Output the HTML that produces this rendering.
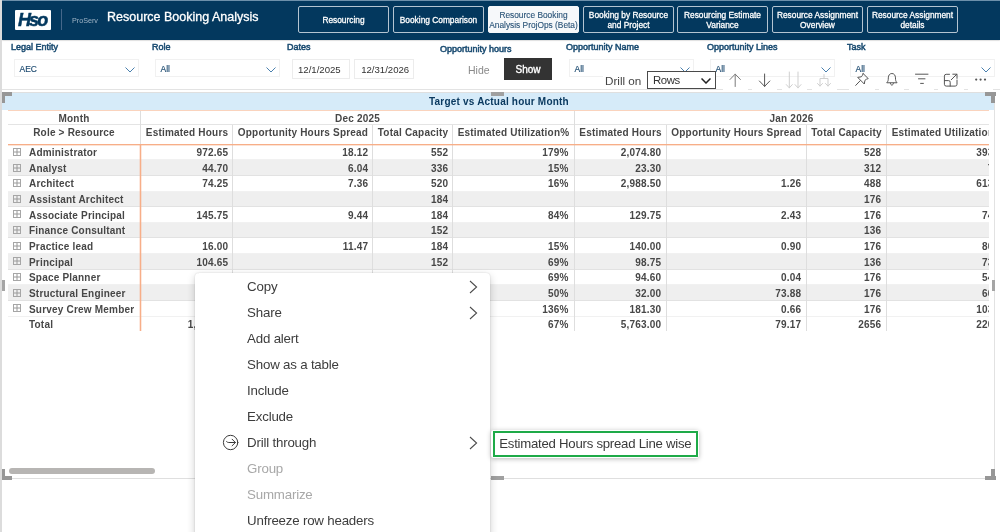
<!DOCTYPE html>
<html><head><meta charset="utf-8">
<style>
*{box-sizing:border-box;margin:0;padding:0}
html,body{width:1000px;height:532px;overflow:hidden;background:#fff;font-family:"Liberation Sans",sans-serif;}
.abs{position:absolute}
#hdr{left:2px;top:0;width:998px;height:39.6px;background:#03385e;box-shadow:0 0.5px 1.5px rgba(0,0,0,.3)}
.nb{position:absolute;top:6.4px;height:26.6px;width:91px;border:1px solid #b4c4d1;border-radius:2px;color:#fff;font-size:8.35px;line-height:10px;text-align:center;display:flex;align-items:center;justify-content:center;white-space:nowrap;padding-top:1.6px;-webkit-text-stroke:0.28px #fff}
.nb.act{background:#f6f8fa;border-color:#f6f8fa;color:#2b5579;-webkit-text-stroke:0.12px #2b5579}
.lbl{position:absolute;font-size:9px;color:#184a70;white-space:nowrap;line-height:11px;-webkit-text-stroke:0.5px #184a70}
.dd{position:absolute;height:18px;border:1px solid #f1f1f1;background:#fff;font-size:8.5px;color:#1c4a70;line-height:18px;padding-left:4.5px;-webkit-text-stroke:0.15px #1c4a70}
.chev{position:absolute;right:3.3px;top:6.5px;width:10px;height:6px;fill:none;stroke:#4a80ae;stroke-width:1}
.dt{position:absolute;top:59px;height:20px;border:1px solid #ececec;font-size:9.6px;color:#333;line-height:20px;text-align:left;font-family:"Liberation Sans",sans-serif}
.tb{font-size:10px;font-weight:bold;color:#474747;letter-spacing:0.2px;line-height:13px}
.c{text-align:center}.r{text-align:right}
.mi{font-size:13.3px;line-height:18px;letter-spacing:-0.2px}
.t{position:absolute;white-space:nowrap}
</style></head><body><div id="root" style="position:absolute;left:0;top:0;width:1000px;height:532px;overflow:hidden;will-change:transform">
<div class="abs" id="hdr"></div><div class="abs" style="left:2px;top:0;width:998px;height:1px;background:#6d90ab"></div>
<!-- logo -->
<div class="abs" style="left:15px;top:10px;width:36px;height:20px;background:#fff;border-radius:1px"></div>
<div class="t" id="logo" style="left:18px;top:10.4px;font-size:18px;font-weight:bold;font-style:italic;color:#03385e;letter-spacing:-1.9px;line-height:20px;-webkit-text-stroke:0.5px #03385e">Hso</div>
<div class="abs" style="left:61px;top:9px;width:1px;height:21px;background:#45678a"></div>
<div class="t" style="left:72px;top:15.5px;font-size:7.2px;color:#a0b4c6;line-height:9px">ProServ</div>
<div class="t" style="left:107px;top:8px;font-size:12.5px;color:#fff;line-height:18px;-webkit-text-stroke:0.3px #fff">Resource Booking Analysis</div>
<!-- nav -->
<div class="nb" style="left:298px">Resourcing</div>
<div class="nb" style="left:393px">Booking Comparison</div>
<div class="nb act" style="left:488px">Resource Booking<br>Analysis ProjOps (Beta)</div>
<div class="nb" style="left:583px">Booking by Resource<br>and Project</div>
<div class="nb" style="left:677px">Resourcing Estimate<br>Variance</div>
<div class="nb" style="left:772px">Resource Assignment<br>Overview</div>
<div class="nb" style="left:867px">Resource Assignment<br>details</div>

<!-- left edge / slicer area -->
<div class="abs" style="left:0;top:0;width:2px;height:532px;background:#dcdcdc"></div>
<div class="abs" style="left:2px;top:89px;width:721px;height:1px;background:#e3e3e3"></div><div class="abs" style="left:748px;top:89px;width:4px;height:1px;background:#e3e3e3"></div><div class="abs" style="left:777px;top:89px;width:5px;height:1px;background:#e3e3e3"></div><div class="abs" style="left:807px;top:89px;width:5px;height:1px;background:#e3e3e3"></div><div class="abs" style="left:837px;top:89px;width:12px;height:1px;background:#e3e3e3"></div><div class="abs" style="left:875px;top:89px;width:4px;height:1px;background:#e3e3e3"></div><div class="abs" style="left:904px;top:89px;width:5px;height:1px;background:#e3e3e3"></div><div class="abs" style="left:934px;top:89px;width:4px;height:1px;background:#e3e3e3"></div><div class="abs" style="left:964px;top:89px;width:4px;height:1px;background:#e3e3e3"></div><div class="abs" style="left:993px;top:89px;width:7px;height:1px;background:#e3e3e3"></div>
<div class="lbl" style="left:11px;top:42px">Legal Entity</div>
<div class="lbl" style="left:152px;top:42px">Role</div>
<div class="lbl" style="left:287px;top:42px">Dates</div>
<div class="lbl" style="left:440px;top:44px">Opportunity hours</div>
<div class="lbl" style="left:566px;top:42px">Opportunity Name</div>
<div class="lbl" style="left:707px;top:42px">Opportunity Lines</div>
<div class="lbl" style="left:847px;top:42px">Task</div>
<div class="dd" style="left:14px;top:59px;width:125px">AEC<svg class="chev" viewBox="0 0 10 6"><path d="M0.5 0.5 L5 5 L9.5 0.5"/></svg></div>
<div class="dd" style="left:155px;top:59px;width:125px">All<svg class="chev" viewBox="0 0 10 6"><path d="M0.5 0.5 L5 5 L9.5 0.5"/></svg></div>
<div class="dd" style="left:569px;top:59px;width:125px">All<svg class="chev" viewBox="0 0 10 6"><path d="M0.5 0.5 L5 5 L9.5 0.5"/></svg></div>
<div class="dd" style="left:710px;top:59px;width:125px">All<svg class="chev" viewBox="0 0 10 6"><path d="M0.5 0.5 L5 5 L9.5 0.5"/></svg></div>
<div class="dd" style="left:850px;top:59px;width:145px">All<svg class="chev" viewBox="0 0 10 6"><path d="M0.5 0.5 L5 5 L9.5 0.5"/></svg></div>
<div class="dt" style="left:292px;width:58px;padding-left:5px">12/1/2025</div>
<div class="dt" style="left:354px;width:60px;padding-left:6.2px">12/31/2026</div>
<div class="t" style="left:468px;top:63px;font-size:10.5px;color:#8a8a8a;line-height:14px">Hide</div>
<div class="abs" style="left:504px;top:58px;width:48px;height:22px;background:#333;color:#fff;font-size:10px;-webkit-text-stroke:0.35px #fff;text-align:center;line-height:23.2px">Show</div>
<!-- visual header -->
<div class="abs" style="left:603px;top:72px;width:50px;height:17px;background:#fff"></div>
<div class="t" style="left:605px;top:73.3px;font-size:11.7px;color:#444;line-height:15px">Drill on</div>
<div class="abs" style="left:647px;top:71px;width:68.5px;height:17.5px;border:1px solid #4a4a4a;background:#fff;font-size:11.4px;letter-spacing:-0.45px;line-height:17.5px;color:#333;padding-left:5px">Rows<svg style="position:absolute;left:53.2px;top:5.8px;width:10px;height:6px;fill:none;stroke:#222;stroke-width:1.5" viewBox="0 0 10 6"><path d="M0.5 0.5 L5 5 L9.5 0.5"/></svg></div>

<svg class="abs" style="left:720px;top:66px;width:280px;height:28px" viewBox="720 66 280 28" fill="none" stroke-linecap="round" stroke-linejoin="round">
<g stroke="#7a7a7a" stroke-width="1"><path d="M735.2 86.5V74.2M730 79.5l5.2-5.4 5.2 5.4"/></g>
<g stroke="#555" stroke-width="1"><path d="M764.6 74V86.3M759.4 81l5.2 5.4 5.2-5.4"/></g>
<g stroke="#cfcfcf" stroke-width="1"><path d="M789.3 72V87.8M786.3 84.6l3 3.3 3-3.3M798 72V87.8M795 84.6l3 3.3 3-3.3"/></g>
<g stroke="#cfcfcf" stroke-width="1"><path d="M824 74.5v4M820 86v-7.5h8V86M817.5 83.5l2.5 2.6 2.5-2.6M825.5 83.5l2.5 2.6 2.5-2.6"/></g>
<g stroke="#555" stroke-width="1"><path d="M863.2 73.6l5 5c-1.4 0.3-2.4 0.9-3.3 1.8l-0.6 3.6-6.6-6.6 3.6-0.6c0.9-0.9 1.5-1.9 1.9-3.2zM860.3 80.6l-4.6 4.8"/></g>
<g stroke="#555" stroke-width="1"><path d="M887 82.5c1.2-1.2 1.3-2.6 1.3-4.6 0-2.6 1.5-4.4 3.6-4.4s3.6 1.8 3.6 4.4c0 2 0.1 3.4 1.3 4.6zM890.4 83.2c0.2 1.3 0.8 1.9 1.5 1.9s1.3-0.6 1.5-1.9"/></g>
<g stroke="#555" stroke-width="1"><path d="M915.5 74.2h12.5M918.5 78.8h6.5M920.6 83.4h2.8"/></g>
<g stroke="#555" stroke-width="1"><path d="M949.5 74.3h-3.3a1.8 1.8 0 0 0-1.8 1.8v8.2a1.8 1.8 0 0 0 1.8 1.8h9a1.8 1.8 0 0 0 1.8-1.8v-4.3M944.4 80.6h4.2a1.6 1.6 0 0 1 1.6 1.6v3.9M951.2 79.8l5.6-5.6M952.8 74.2h4.2v4.2"/></g>
<g fill="#555" stroke="none"><circle cx="976.2" cy="79.6" r="1.1"/><circle cx="980.6" cy="79.6" r="1.1"/><circle cx="985" cy="79.6" r="1.1"/></g>
</svg>
<!-- visual container -->
<div class="abs" style="left:2px;top:92px;width:993px;height:387px;border:1px solid #dfdfdf;border-left:none;border-right:1.5px solid #e2e2e2"></div>
<div class="abs" style="left:2px;top:93px;width:991.5px;height:17px;background:#d6ebf9"></div>
<div class="t tb" style="left:429px;top:95px;color:#0b3a60;line-height:13px">Target vs Actual hour Month</div>
<div class="abs" id="tbl" style="left:8px;top:110px;width:981px;height:222px;overflow:hidden">
<div class="abs" style="left:0;top:0;width:981px;height:1.4px;background:#fad3bd"></div>
<div class="abs" style="left:0;top:14px;width:981px;height:1px;background:#e4e4e4"></div>
<div class="abs" style="left:0;top:34.7px;width:981px;height:15.63px;background:#fff;border-bottom:1px solid #f1f1f1"></div>
<div class="abs" style="left:0;top:50.33px;width:981px;height:15.63px;background:#efefef;border-bottom:1px solid #e2e2e2"></div>
<div class="abs" style="left:0;top:65.96px;width:981px;height:15.63px;background:#fff;border-bottom:1px solid #f1f1f1"></div>
<div class="abs" style="left:0;top:81.59px;width:981px;height:15.63px;background:#efefef;border-bottom:1px solid #e2e2e2"></div>
<div class="abs" style="left:0;top:97.22px;width:981px;height:15.63px;background:#fff;border-bottom:1px solid #f1f1f1"></div>
<div class="abs" style="left:0;top:112.85px;width:981px;height:15.63px;background:#efefef;border-bottom:1px solid #e2e2e2"></div>
<div class="abs" style="left:0;top:128.48px;width:981px;height:15.63px;background:#fff;border-bottom:1px solid #f1f1f1"></div>
<div class="abs" style="left:0;top:144.11px;width:981px;height:15.63px;background:#efefef;border-bottom:1px solid #e2e2e2"></div>
<div class="abs" style="left:0;top:159.74px;width:981px;height:15.63px;background:#fff;border-bottom:1px solid #f1f1f1"></div>
<div class="abs" style="left:0;top:175.37px;width:981px;height:15.63px;background:#efefef;border-bottom:1px solid #e2e2e2"></div>
<div class="abs" style="left:0;top:191.0px;width:981px;height:15.63px;background:#fff;border-bottom:1px solid #f1f1f1"></div>
<div class="abs" style="left:0;top:206.63px;width:981px;height:15.63px;background:#fff;"></div>
<div class="t tb c" style="left:0;top:1.7px;width:132px">Month</div>
<div class="t tb c" style="left:0;top:15.7px;width:132px">Role &gt; Resource</div>
<div class="t tb c" style="left:133px;top:1.7px;width:433px">Dec 2025</div>
<div class="t tb c" style="left:566.5px;top:1.7px;width:434px">Jan 2026</div>
<div class="t tb c" style="left:133px;top:15.7px;width:92px">Estimated Hours</div>
<div class="t tb c" style="left:225px;top:15.7px;width:140px">Opportunity Hours Spread</div>
<div class="t tb c" style="left:365px;top:15.7px;width:80px">Total Capacity</div>
<div class="t tb c" style="left:445px;top:15.7px;width:121px">Estimated Utilization%</div>
<div class="t tb c" style="left:566.5px;top:15.7px;width:92px">Estimated Hours</div>
<div class="t tb c" style="left:658.5px;top:15.7px;width:140px">Opportunity Hours Spread</div>
<div class="t tb c" style="left:798.5px;top:15.7px;width:80px">Total Capacity</div>
<div class="t tb c" style="left:878.5px;top:15.7px;width:122px">Estimated Utilization%</div>
<div class="abs" style="left:224px;top:15px;width:1px;height:206px;background:#dedede"></div>
<div class="abs" style="left:364px;top:15px;width:1px;height:206px;background:#dedede"></div>
<div class="abs" style="left:444px;top:15px;width:1px;height:206px;background:#dedede"></div>
<div class="abs" style="left:565.5px;top:1px;width:1px;height:220px;background:#dedede"></div>
<div class="abs" style="left:657.5px;top:15px;width:1px;height:206px;background:#dedede"></div>
<div class="abs" style="left:797.5px;top:15px;width:1px;height:206px;background:#dedede"></div>
<div class="abs" style="left:877.5px;top:15px;width:1px;height:206px;background:#dedede"></div>
<div class="abs" style="left:0;top:34px;width:981px;height:1px;background:#f7ae88"></div><div class="abs" style="left:0;top:35px;width:981px;height:1px;background:rgba(247,174,136,.35)"></div>
<div class="abs" style="left:132px;top:1px;width:1px;height:34px;background:#dedede"></div>
<div class="abs" style="left:132px;top:34px;width:1px;height:186.5px;background:#f7ae88"></div><div class="abs" style="left:131px;top:35px;width:1px;height:185.5px;background:rgba(247,174,136,.28)"></div><div class="abs" style="left:133px;top:35px;width:1px;height:185.5px;background:rgba(247,174,136,.28)"></div>
<svg class="abs" style="left:4.8px;top:37.9px;width:8px;height:8px" viewBox="0 0 8 8"><rect x="0.5" y="0.5" width="7" height="7" fill="none" stroke="#a6a6a6"/><path d="M4 1v6M1 4h6" stroke="#9a9a9a" stroke-width="1" fill="none"/></svg>
<div class="t tb" style="left:21px;top:36.2px">Administrator</div>
<div class="t tb r" style="left:133px;top:36.2px;width:87.2px">972.65</div>
<div class="t tb r" style="left:225px;top:36.2px;width:135.2px">18.12</div>
<div class="t tb r" style="left:365px;top:36.2px;width:75.2px">552</div>
<div class="t tb r" style="left:445px;top:36.2px;width:115.7px">179%</div>
<div class="t tb r" style="left:566.5px;top:36.2px;width:86.7px">2,074.80</div>
<div class="t tb r" style="left:798.5px;top:36.2px;width:74.7px">528</div>
<div class="t tb r" style="left:878.5px;top:36.2px;width:116.2px">393%</div>
<svg class="abs" style="left:4.8px;top:53.53px;width:8px;height:8px" viewBox="0 0 8 8"><rect x="0.5" y="0.5" width="7" height="7" fill="none" stroke="#a6a6a6"/><path d="M4 1v6M1 4h6" stroke="#9a9a9a" stroke-width="1" fill="none"/></svg>
<div class="t tb" style="left:21px;top:51.83px">Analyst</div>
<div class="t tb r" style="left:133px;top:51.83px;width:87.2px">44.70</div>
<div class="t tb r" style="left:225px;top:51.83px;width:135.2px">6.04</div>
<div class="t tb r" style="left:365px;top:51.83px;width:75.2px">336</div>
<div class="t tb r" style="left:445px;top:51.83px;width:115.7px">15%</div>
<div class="t tb r" style="left:566.5px;top:51.83px;width:86.7px">23.30</div>
<div class="t tb r" style="left:798.5px;top:51.83px;width:74.7px">312</div>
<div class="t tb r" style="left:878.5px;top:51.83px;width:116.2px">7%</div>
<svg class="abs" style="left:4.8px;top:69.16px;width:8px;height:8px" viewBox="0 0 8 8"><rect x="0.5" y="0.5" width="7" height="7" fill="none" stroke="#a6a6a6"/><path d="M4 1v6M1 4h6" stroke="#9a9a9a" stroke-width="1" fill="none"/></svg>
<div class="t tb" style="left:21px;top:67.46px">Architect</div>
<div class="t tb r" style="left:133px;top:67.46px;width:87.2px">74.25</div>
<div class="t tb r" style="left:225px;top:67.46px;width:135.2px">7.36</div>
<div class="t tb r" style="left:365px;top:67.46px;width:75.2px">520</div>
<div class="t tb r" style="left:445px;top:67.46px;width:115.7px">16%</div>
<div class="t tb r" style="left:566.5px;top:67.46px;width:86.7px">2,988.50</div>
<div class="t tb r" style="left:658.5px;top:67.46px;width:134.7px">1.26</div>
<div class="t tb r" style="left:798.5px;top:67.46px;width:74.7px">488</div>
<div class="t tb r" style="left:878.5px;top:67.46px;width:116.2px">613%</div>
<svg class="abs" style="left:4.8px;top:84.79px;width:8px;height:8px" viewBox="0 0 8 8"><rect x="0.5" y="0.5" width="7" height="7" fill="none" stroke="#a6a6a6"/><path d="M4 1v6M1 4h6" stroke="#9a9a9a" stroke-width="1" fill="none"/></svg>
<div class="t tb" style="left:21px;top:83.09px">Assistant Architect</div>
<div class="t tb r" style="left:365px;top:83.09px;width:75.2px">184</div>
<div class="t tb r" style="left:798.5px;top:83.09px;width:74.7px">176</div>
<svg class="abs" style="left:4.8px;top:100.42px;width:8px;height:8px" viewBox="0 0 8 8"><rect x="0.5" y="0.5" width="7" height="7" fill="none" stroke="#a6a6a6"/><path d="M4 1v6M1 4h6" stroke="#9a9a9a" stroke-width="1" fill="none"/></svg>
<div class="t tb" style="left:21px;top:98.72px">Associate Principal</div>
<div class="t tb r" style="left:133px;top:98.72px;width:87.2px">145.75</div>
<div class="t tb r" style="left:225px;top:98.72px;width:135.2px">9.44</div>
<div class="t tb r" style="left:365px;top:98.72px;width:75.2px">184</div>
<div class="t tb r" style="left:445px;top:98.72px;width:115.7px">84%</div>
<div class="t tb r" style="left:566.5px;top:98.72px;width:86.7px">129.75</div>
<div class="t tb r" style="left:658.5px;top:98.72px;width:134.7px">2.43</div>
<div class="t tb r" style="left:798.5px;top:98.72px;width:74.7px">176</div>
<div class="t tb r" style="left:878.5px;top:98.72px;width:116.2px">74%</div>
<svg class="abs" style="left:4.8px;top:116.05px;width:8px;height:8px" viewBox="0 0 8 8"><rect x="0.5" y="0.5" width="7" height="7" fill="none" stroke="#a6a6a6"/><path d="M4 1v6M1 4h6" stroke="#9a9a9a" stroke-width="1" fill="none"/></svg>
<div class="t tb" style="left:21px;top:114.35px">Finance Consultant</div>
<div class="t tb r" style="left:365px;top:114.35px;width:75.2px">152</div>
<div class="t tb r" style="left:798.5px;top:114.35px;width:74.7px">136</div>
<svg class="abs" style="left:4.8px;top:131.68px;width:8px;height:8px" viewBox="0 0 8 8"><rect x="0.5" y="0.5" width="7" height="7" fill="none" stroke="#a6a6a6"/><path d="M4 1v6M1 4h6" stroke="#9a9a9a" stroke-width="1" fill="none"/></svg>
<div class="t tb" style="left:21px;top:129.98px">Practice lead</div>
<div class="t tb r" style="left:133px;top:129.98px;width:87.2px">16.00</div>
<div class="t tb r" style="left:225px;top:129.98px;width:135.2px">11.47</div>
<div class="t tb r" style="left:365px;top:129.98px;width:75.2px">184</div>
<div class="t tb r" style="left:445px;top:129.98px;width:115.7px">15%</div>
<div class="t tb r" style="left:566.5px;top:129.98px;width:86.7px">140.00</div>
<div class="t tb r" style="left:658.5px;top:129.98px;width:134.7px">0.90</div>
<div class="t tb r" style="left:798.5px;top:129.98px;width:74.7px">176</div>
<div class="t tb r" style="left:878.5px;top:129.98px;width:116.2px">80%</div>
<svg class="abs" style="left:4.8px;top:147.31px;width:8px;height:8px" viewBox="0 0 8 8"><rect x="0.5" y="0.5" width="7" height="7" fill="none" stroke="#a6a6a6"/><path d="M4 1v6M1 4h6" stroke="#9a9a9a" stroke-width="1" fill="none"/></svg>
<div class="t tb" style="left:21px;top:145.61px">Principal</div>
<div class="t tb r" style="left:133px;top:145.61px;width:87.2px">104.65</div>
<div class="t tb r" style="left:365px;top:145.61px;width:75.2px">152</div>
<div class="t tb r" style="left:445px;top:145.61px;width:115.7px">69%</div>
<div class="t tb r" style="left:566.5px;top:145.61px;width:86.7px">98.75</div>
<div class="t tb r" style="left:798.5px;top:145.61px;width:74.7px">136</div>
<div class="t tb r" style="left:878.5px;top:145.61px;width:116.2px">73%</div>
<svg class="abs" style="left:4.8px;top:162.94px;width:8px;height:8px" viewBox="0 0 8 8"><rect x="0.5" y="0.5" width="7" height="7" fill="none" stroke="#a6a6a6"/><path d="M4 1v6M1 4h6" stroke="#9a9a9a" stroke-width="1" fill="none"/></svg>
<div class="t tb" style="left:21px;top:161.24px">Space Planner</div>
<div class="t tb r" style="left:133px;top:161.24px;width:87.2px">126.50</div>
<div class="t tb r" style="left:225px;top:161.24px;width:135.2px">0.21</div>
<div class="t tb r" style="left:365px;top:161.24px;width:75.2px">184</div>
<div class="t tb r" style="left:445px;top:161.24px;width:115.7px">69%</div>
<div class="t tb r" style="left:566.5px;top:161.24px;width:86.7px">94.60</div>
<div class="t tb r" style="left:658.5px;top:161.24px;width:134.7px">0.04</div>
<div class="t tb r" style="left:798.5px;top:161.24px;width:74.7px">176</div>
<div class="t tb r" style="left:878.5px;top:161.24px;width:116.2px">54%</div>
<svg class="abs" style="left:4.8px;top:178.57px;width:8px;height:8px" viewBox="0 0 8 8"><rect x="0.5" y="0.5" width="7" height="7" fill="none" stroke="#a6a6a6"/><path d="M4 1v6M1 4h6" stroke="#9a9a9a" stroke-width="1" fill="none"/></svg>
<div class="t tb" style="left:21px;top:176.87px">Structural Engineer</div>
<div class="t tb r" style="left:133px;top:176.87px;width:87.2px">92.00</div>
<div class="t tb r" style="left:225px;top:176.87px;width:135.2px">12.35</div>
<div class="t tb r" style="left:365px;top:176.87px;width:75.2px">184</div>
<div class="t tb r" style="left:445px;top:176.87px;width:115.7px">50%</div>
<div class="t tb r" style="left:566.5px;top:176.87px;width:86.7px">32.00</div>
<div class="t tb r" style="left:658.5px;top:176.87px;width:134.7px">73.88</div>
<div class="t tb r" style="left:798.5px;top:176.87px;width:74.7px">176</div>
<div class="t tb r" style="left:878.5px;top:176.87px;width:116.2px">66%</div>
<svg class="abs" style="left:4.8px;top:194.2px;width:8px;height:8px" viewBox="0 0 8 8"><rect x="0.5" y="0.5" width="7" height="7" fill="none" stroke="#a6a6a6"/><path d="M4 1v6M1 4h6" stroke="#9a9a9a" stroke-width="1" fill="none"/></svg>
<div class="t tb" style="left:21px;top:192.5px">Survey Crew Member</div>
<div class="t tb r" style="left:133px;top:192.5px;width:87.2px">250.00</div>
<div class="t tb r" style="left:225px;top:192.5px;width:135.2px">1.93</div>
<div class="t tb r" style="left:365px;top:192.5px;width:75.2px">184</div>
<div class="t tb r" style="left:445px;top:192.5px;width:115.7px">136%</div>
<div class="t tb r" style="left:566.5px;top:192.5px;width:86.7px">181.30</div>
<div class="t tb r" style="left:658.5px;top:192.5px;width:134.7px">0.66</div>
<div class="t tb r" style="left:798.5px;top:192.5px;width:74.7px">176</div>
<div class="t tb r" style="left:878.5px;top:192.5px;width:116.2px">103%</div>
<div class="t tb" style="left:21px;top:208.13px">Total</div>
<div class="t tb r" style="left:133px;top:208.13px;width:87.2px">1,806.50</div>
<div class="t tb r" style="left:225px;top:208.13px;width:135.2px">66.92</div>
<div class="t tb r" style="left:365px;top:208.13px;width:75.2px">2696</div>
<div class="t tb r" style="left:445px;top:208.13px;width:115.7px">67%</div>
<div class="t tb r" style="left:566.5px;top:208.13px;width:86.7px">5,763.00</div>
<div class="t tb r" style="left:658.5px;top:208.13px;width:134.7px">79.17</div>
<div class="t tb r" style="left:798.5px;top:208.13px;width:74.7px">2656</div>
<div class="t tb r" style="left:878.5px;top:208.13px;width:116.2px">220%</div>
</div>
<div class="abs" style="left:2px;top:92px;width:9.6px;height:3.8px;background:#979797"></div><div class="abs" style="left:2px;top:92px;width:2.7px;height:10.5px;background:#979797"></div>
<div class="abs" style="left:985px;top:92px;width:10.5px;height:3.8px;background:#979797"></div><div class="abs" style="left:991.3px;top:92px;width:4.2px;height:10.5px;background:#979797"></div>
<div class="abs" style="left:2px;top:475.8px;width:9.6px;height:3.8px;background:#979797"></div><div class="abs" style="left:2px;top:469px;width:2.7px;height:10.6px;background:#979797"></div>
<div class="abs" style="left:985px;top:475.8px;width:10.5px;height:3.8px;background:#979797"></div><div class="abs" style="left:991.3px;top:469px;width:4.2px;height:10.6px;background:#979797"></div>
<div class="abs" style="left:491.3px;top:92px;width:13px;height:3.8px;background:#a0a0a0"></div>
<div class="abs" style="left:491.3px;top:475.8px;width:13px;height:3.8px;background:#a0a0a0"></div>
<div class="abs" style="left:2px;top:280px;width:3px;height:11px;background:#a5a5a5"></div>
<div class="abs" style="left:992px;top:280px;width:3px;height:11px;background:#a5a5a5"></div>
<div class="abs" style="left:9px;top:467.5px;width:146px;height:6px;border-radius:3px;background:#b7b5b3"></div>
<div class="abs" id="menu" style="left:194.5px;top:272.8px;width:295.5px;height:280px;background:#fff;border-radius:4px;box-shadow:0 0 2px rgba(0,0,0,.16),0 3px 9px rgba(0,0,0,.2)">
<div class="t mi" style="left:52.6px;top:5.2px;color:#3d3d3d">Copy</div>
<svg class="abs" style="left:274px;top:6.9px;width:9px;height:14px;fill:none;stroke:#4a4a4a;stroke-width:1.05" viewBox="0 0 9 14"><path d="M1 1 L7.6 7 L1 13"/></svg>
<div class="t mi" style="left:52.6px;top:31.2px;color:#3d3d3d">Share</div>
<svg class="abs" style="left:274px;top:32.9px;width:9px;height:14px;fill:none;stroke:#4a4a4a;stroke-width:1.05" viewBox="0 0 9 14"><path d="M1 1 L7.6 7 L1 13"/></svg>
<div class="t mi" style="left:52.6px;top:57.2px;color:#3d3d3d">Add alert</div>
<div class="t mi" style="left:52.6px;top:83.2px;color:#3d3d3d">Show as a table</div>
<div class="t mi" style="left:52.6px;top:109.2px;color:#3d3d3d">Include</div>
<div class="t mi" style="left:52.6px;top:135.2px;color:#3d3d3d">Exclude</div>
<div class="t mi" style="left:52.6px;top:161.2px;color:#3d3d3d">Drill through</div>
<svg class="abs" style="left:274px;top:162.9px;width:9px;height:14px;fill:none;stroke:#4a4a4a;stroke-width:1.05" viewBox="0 0 9 14"><path d="M1 1 L7.6 7 L1 13"/></svg>
<svg class="abs" style="left:27px;top:161.5px;width:17px;height:17px;fill:none;stroke:#3a3a3a;stroke-width:1;stroke-linecap:round;stroke-linejoin:round" viewBox="0 0 17 17"><circle cx="8.6" cy="8.5" r="7.2"/><path d="M4.6 7.6c0.6 0.6 1.2 0.9 2.2 0.9h6.4M10.1 5.2l3.3 3.3-3.3 3.3"/></svg>
<div class="t mi" style="left:52.6px;top:187.2px;color:#a8a8a8">Group</div>
<div class="t mi" style="left:52.6px;top:213.2px;color:#a8a8a8">Summarize</div>
<div class="t mi" style="left:52.6px;top:239.2px;color:#3d3d3d">Unfreeze row headers</div>
</div>
<div class="abs" style="left:490.5px;top:430px;width:208.5px;height:28px;background:#fff;border-radius:3px;box-shadow:0 1px 5px rgba(0,0,0,.28)"></div>
<div class="abs" style="left:493px;top:431px;width:204.6px;height:25.6px;border:2.3px solid #1eaa48"></div>
<div class="t" style="left:499.3px;top:436.4px;font-size:13.2px;letter-spacing:-0.25px;line-height:16px;color:#3a3a3a">Estimated Hours spread Line wise</div>
</div></body></html>
